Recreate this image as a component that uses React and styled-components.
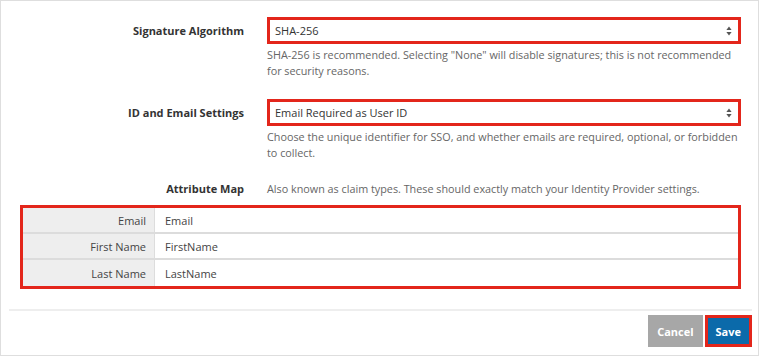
import styled, { createGlobalStyle } from 'styled-components'

const GlobalStyle = createGlobalStyle`
  body {
    margin: 0;
    background: #fff;
    font-family: "Open Sans", "Liberation Sans", sans-serif;
    color: #333;
  }
`

const Panel = styled.div`
  width: 759px;
  height: 356px;
  box-sizing: border-box;
  border: 1px solid #dedede;
  display: flex;
  flex-direction: column;
  padding-top: 16px;
`

const Field = styled.div`
  display: grid;
  grid-template-columns: 243px 474px;
  column-gap: 23px;
  margin-bottom: ${p => p.$gap || 0}px;
`

const Label = styled.div`
  font-size: 11px;
  font-weight: 700;
  color: #333;
  text-align: right;
  line-height: ${p => p.$lh || 27}px;
`

const Control = styled.div`
  display: flex;
  flex-direction: column;
`

const Select = styled.div`
  height: 27px;
  box-sizing: border-box;
  border: 3px solid #e3261b;
  background: #fff;
  display: flex;
  align-items: center;
  justify-content: space-between;
  padding: 0 6px 0 5px;
  font-size: 11px;
  color: #333;
`

const Help = styled.div`
  font-size: 10.8px;
  line-height: 16px;
  color: #666;
  margin-top: ${p => p.$top || 0}px;
`

const AttrTable = styled.div`
  margin: 8px 0 0 19px;
  width: 721px;
  box-sizing: border-box;
  border: 3px solid #e3261b;
  display: flex;
  flex-direction: column;
`

const AttrRow = styled.div`
  display: grid;
  grid-template-columns: 132px 1fr;
  height: 26px;
  box-sizing: border-box;
  border-bottom: ${p => (p.$last ? 'none' : '2px solid #dcdcdc')};
`

const AttrKey = styled.div`
  background: #eeeeee;
  border-right: 1px solid #dddddd;
  padding-right: 8px;
  font-size: 11px;
  color: #444;
  display: flex;
  align-items: center;
  justify-content: flex-end;
`

const AttrValue = styled.div`
  padding-left: 10px;
  font-size: 11px;
  color: #444;
  display: flex;
  align-items: center;
`

const Footer = styled.div`
  margin: 20px 6px 0 8px;
  border-top: 2px solid #eeeeee;
  display: flex;
  justify-content: flex-end;
  gap: 2px;
  padding-top: 4px;
`

const Button = styled.button`
  height: 32px;
  box-sizing: border-box;
  border: ${p => (p.$primary ? '3px solid #e3261b' : 'none')};
  background: ${p => (p.$primary ? '#0b6aaa' : '#a7a7a7')};
  color: #fff;
  font-family: inherit;
  font-size: 11px;
  font-weight: 700;
  padding: 0 ${p => (p.$primary ? 8 : 9)}px;
  cursor: pointer;
`

const Arrows = () => (
  <svg width="6" height="10" viewBox="0 0 6 10">
    <path d="M3 0.5 L5.6 4 L0.4 4 Z" fill="#555" />
    <path d="M3 9.5 L5.6 6 L0.4 6 Z" fill="#555" />
  </svg>
)

const attributes = [
  ['Email', 'Email'],
  ['First Name', 'FirstName'],
  ['Last Name', 'LastName'],
]

export default function App() {
  return (
    <>
      <GlobalStyle />
      <Panel>
        <Field $gap={20}>
          <Label>Signature Algorithm</Label>
          <Control>
            <Select>
              SHA-256
              <Arrows />
            </Select>
            <Help $top={3}>
              SHA-256 is recommended. Selecting "None" will disable signatures; this is not recommended
              for security reasons.
            </Help>
          </Control>
        </Field>
        <Field $gap={20}>
          <Label>ID and Email Settings</Label>
          <Control>
            <Select>
              Email Required as User ID
              <Arrows />
            </Select>
            <Help $top={3}>
              Choose the unique identifier for SSO, and whether emails are required, optional, or forbidden
              to collect.
            </Help>
          </Control>
        </Field>
        <Field>
          <Label $lh={16}>Attribute Map</Label>
          <Help>Also known as claim types. These should exactly match your Identity Provider settings.</Help>
        </Field>
        <AttrTable>
          {attributes.map(([key, value], i) => (
            <AttrRow key={key} $last={i === attributes.length - 1}>
              <AttrKey>{key}</AttrKey>
              <AttrValue>{value}</AttrValue>
            </AttrRow>
          ))}
        </AttrTable>
        <Footer>
          <Button>Cancel</Button>
          <Button $primary>Save</Button>
        </Footer>
      </Panel>
    </>
  )
}
